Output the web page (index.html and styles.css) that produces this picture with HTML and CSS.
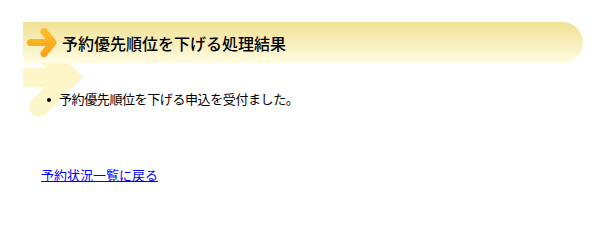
FILE: index.html
```html
<!DOCTYPE html>
<html lang="ja">
<head>
<meta charset="utf-8">
<title>処理結果</title>
<link rel="stylesheet" href="styles.css">
</head>
<body>
<div class="page">
  <svg class="deco" width="100" height="125" viewBox="0 0 100 125" aria-hidden="true">
    <rect x="23" y="68" width="48" height="19" fill="#fcf6c8"/>
    <polyline points="40,48 69,77 39,107" fill="none" stroke="#fcf6c8" stroke-width="20" stroke-linejoin="miter" stroke-linecap="round"/>
  </svg>
  <div class="head">
    <svg class="arrow" width="34" height="29" viewBox="0 0 34 29" aria-hidden="true">
      <defs>
        <linearGradient id="og" gradientUnits="userSpaceOnUse" x1="0" y1="0" x2="0" y2="29">
          <stop offset="0" stop-color="#ffc02c"/>
          <stop offset="1" stop-color="#f7a016"/>
        </linearGradient>
      </defs>
      <line x1="3.5" y1="14.5" x2="22" y2="14.5" stroke="url(#og)" stroke-width="7" stroke-linecap="round"/>
      <polyline points="17,3.5 26,14.5 17,25.5" fill="none" stroke="url(#og)" stroke-width="7" stroke-linecap="round" stroke-linejoin="round"/>
    </svg>
    <h1 class="title">予約優先順位を下げる処理結果</h1>
  </div>
  <ul class="msg">
    <li>予約優先順位を下げる申込を受付ました。</li>
  </ul>
  <p class="back"><a href="#">予約状況一覧に戻る</a></p>
</div>
</body>
</html>
```
FILE: styles.css
```css
html, body {
  margin: 0;
  padding: 0;
  background: #ffffff;
}
body {
  font-family: "Noto Sans CJK JP", "Noto Sans", sans-serif;
  color: #000000;
}
.page {
  position: relative;
  padding: 22px 17px 0 23px;
}
.deco {
  position: absolute;
  left: 0;
  top: 0;
  z-index: 0;
}
.head {
  position: relative;
  z-index: 1;
  height: 41px;
  display: flex;
  align-items: center;
  border-radius: 0 21px 21px 0;
  background: linear-gradient(to bottom, #f0e194 0%, #f7eebb 50%, #fffde3 100%);
}
.arrow {
  margin-left: 4px;
  flex: none;
}
.title {
  margin: 0 0 0 1px;
  font-size: 16px;
  line-height: 20px;
  font-weight: 500;
  color: #000000;
}
.msg {
  position: relative;
  z-index: 1;
  margin: 28px 0 0 0;
  padding: 0 0 0 36px;
  font-size: 13px;
  line-height: 16px;
  letter-spacing: -0.4px;
}
.msg li {
  list-style: none;
}
.msg li::before {
  content: "";
  display: inline-block;
  width: 4px;
  height: 4px;
  border-radius: 50%;
  background: #000000;
  margin: 0 8px 0 -12px;
  vertical-align: middle;
}
.back {
  margin: 60px 0 0 0;
  padding-left: 18px;
  font-size: 13px;
  line-height: 16px;
}
.back a {
  color: #0000ff;
  text-decoration: underline;
}
```
